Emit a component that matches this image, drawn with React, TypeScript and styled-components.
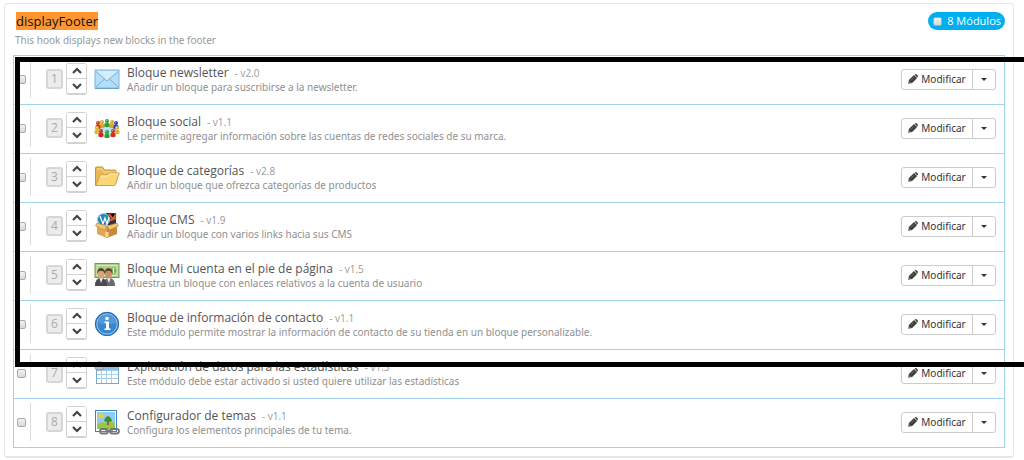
import React from 'react';
import styled, { createGlobalStyle } from 'styled-components';

const GlobalStyle = createGlobalStyle`
  * { box-sizing: border-box; }
  body {
    margin: 0;
    background: #fff;
    color: #555;
    font-family: "Open Sans", "Noto Sans", sans-serif;
    font-size: 12px;
  }
  button, input { font: inherit; margin: 0; }
`;

const Page = styled.main`
  position: relative;
  padding: 3px 10px 0 4px;
  overflow: hidden;
`;

const Panel = styled.section`
  padding: 8px 8px;
  border: 1px solid #e6e6e6;
  border-bottom-width: 2px;
  border-radius: 4px;
`;

const PanelHeader = styled.header`
  display: flex;
  justify-content: space-between;
  align-items: flex-start;
  padding-left: 2px;
  height: 43px;
`;

const HookName = styled.h1`
  display: table;
  margin: 0 0 0 1px;
  background: #ff9632;
  color: #111;
  font-size: 13px;
  font-weight: 400;
  line-height: 18px;
`;

const HookDescription = styled.p`
  margin: 3px 0 0;
  color: #999;
  font-family: "Noto Sans", "Open Sans", sans-serif;
  font-size: 10px;
  line-height: 14px;
`;

const CountBadge = styled.label`
  display: flex;
  align-items: center;
  gap: 5px;
  height: 18px;
  padding: 0 4px 0 5px;
  border-radius: 9px;
  background: #00aff0;
  color: #fff;
  font-size: 11px;
  line-height: 20px;
`;

const Checkbox = styled.input.attrs({ type: 'checkbox' })`
  appearance: none;
  flex: none;
  width: 9px;
  height: 9px;
  border: 1px solid #aaa;
  border-radius: 2px;
  background: linear-gradient(#f2f2f2, #d8d8d8);
`;

const ModuleList = styled.ul`
  margin: 0;
  padding: 0;
  list-style: none;
  border: 1px solid #9fd3ee;
`;

const ModuleRow = styled.li`
  display: flex;
  align-items: center;
  height: 49px;
  padding: 0 8px 2px 3px;
  border-bottom: 1px solid #9fd3ee;
  &:last-child {
    height: 48px;
    border-bottom: 0;
  }
`;

const SelectCell = styled.div`
  display: flex;
  align-items: center;
  width: 14px;
  height: 38px;
  margin-right: 15px;
  border-right: 1px solid #ddd;
`;

const Position = styled.span`
  width: 17px;
  height: 20px;
  margin-right: 3px;
  border: 2px solid #d6d6d6;
  border-radius: 3px;
  background: #ececec;
  color: #aaa;
  font-size: 12px;
  line-height: 16px;
  text-align: center;
`;

const Mover = styled.div`
  width: 21px;
  margin-right: 7px;
  border: 1px solid #d2d2d2;
  border-bottom-width: 2px;
  border-radius: 3px;
`;

const MoveButton = styled.button`
  display: flex;
  align-items: center;
  justify-content: center;
  width: 100%;
  height: 14px;
  padding: 0;
  border: 0;
  background: #fff;
  & + & {
    height: 15px;
    border-top: 1px solid #d2d2d2;
  }
`;

const IconFrame = styled.svg`
  flex: none;
  width: 26px;
  height: 28px;
`;

const Details = styled.div`
  flex: 1;
  min-width: 0;
  margin: 0 8px 0 7px;
  white-space: nowrap;
`;

const Title = styled.h2`
  margin: 0;
  color: #555;
  font-size: 12px;
  font-weight: 400;
  line-height: 16px;
`;

const Version = styled.small`
  margin-left: 6px;
  color: #999;
  font-size: 10px;
`;

const Description = styled.p`
  margin: 0;
  color: #909090;
  font-family: "Noto Sans", "Open Sans", sans-serif;
  font-size: 10px;
  line-height: 13px;
`;

const ButtonGroup = styled.div`
  display: flex;
  height: 21px;
  border: 1px solid #ccc;
  border-radius: 3px;
`;

const ActionButton = styled.button<{ $toggle?: boolean }>`
  display: flex;
  align-items: center;
  justify-content: center;
  gap: 3px;
  width: ${p => (p.$toggle ? 23 : 70)}px;
  padding: 0;
  border: 0;
  border-left: ${p => (p.$toggle ? '1px solid #ccc' : '0')};
  background: transparent;
  color: #333;
  font-family: "Noto Sans", "Open Sans", sans-serif;
  font-size: 10px;
  line-height: 16px;
`;

const HighlightFrame = styled.div`
  position: absolute;
  top: 57px;
  left: 15px;
  right: 0;
  height: 310px;
  border: 5px solid #000;
  border-right: 0;
  pointer-events: none;
`;

const Chevron = ({ down }: { down?: boolean }) => (
  <svg width="12" height="8" viewBox="0 0 12 8" aria-hidden="true">
    <path d={down ? 'M2 2l4 4 4-4' : 'M2 6l4-4 4 4'} fill="none" stroke="#444" strokeWidth="2.2" />
  </svg>
);

const Pencil = () => (
  <svg width="10" height="10" viewBox="0 0 10 10" aria-hidden="true">
    <path d="M.2 9.800l.7-3.900L6 .9l3.100 3.100-5 5zM6.600.6L7.200.2q.6-.4 1.200 0l1.400 1.400q.4.600 0 1.200l-.5.700z" fill="#3c3c3c" />
    <path d="M2.800 6.500l3.200-3.200" stroke="#aaa" strokeWidth=".5" />
    <path d="M1.200 7.700l1.100 1.100" stroke="#eee" strokeWidth=".7" />
  </svg>
);

const Caret = () => (
  <svg width="6" height="3" viewBox="0 0 6 3" aria-hidden="true">
    <path d="M0 0h6L3 3z" fill="#333" />
  </svg>
);

const ModuleIcon = ({ children }: { children: React.ReactNode }) => (
  <IconFrame viewBox="0 0 26 28" aria-hidden="true">{children}</IconFrame>
);

const MailIcon = () => (
  <ModuleIcon>
    <rect x="1" y="5" width="24" height="18" fill="#b5def8" stroke="#7db4dc" />
    <path d="M2 6h22L13 16z" fill="#d4edfc" />
    <path d="M2 22l8.500-8M24 22l-8.500-8M2 6.500l11 9.500 11-9.500" fill="none" stroke="#76aed6" />
    <path d="M1 23.500h24" stroke="#6ba3cf" />
  </ModuleIcon>
);

const Person = ({ x, y, color }: { x: number; y: number; color: string }) => (
  <g fill={color}>
    <path d={`M${x - 2.6} ${y + 5.5}q-.4-4 2.600-4t2.600 4q-2.600 1.600-5.200 0z`} />
    <circle cx={x} cy={y} r="2" />
    <circle cx={x - 0.6} cy={y - 0.6} r=".7" fill="#fff" opacity=".5" />
  </g>
);

const SocialIcon = () => (
  <ModuleIcon>
    <ellipse cx="13" cy="15" rx="9" ry="6" fill="#b9e2f2" />
    <Person x={8} y={8} color="#d8a72c" />
    <Person x={18} y={8} color="#d8a72c" />
    <Person x={13} y={7} color="#2f9e37" />
    <Person x={4} y={9} color="#d7301f" />
    <Person x={22} y={9} color="#2345c4" />
    <Person x={3} y={14} color="#e0b33a" />
    <Person x={23} y={14} color="#e0b33a" />
    <Person x={7} y={17} color="#cf2a1f" />
    <Person x={19} y={17} color="#d7301f" />
    <Person x={13} y={18} color="#2f9e37" />
  </ModuleIcon>
);

const FolderIcon = () => (
  <ModuleIcon>
    <path d="M1.500 22.500V5q0-1 1-1h6l2 3H21q1 0 1 1v5z" fill="#e9b956" stroke="#c99436" />
    <path d="M3 6h5l2 3h11" fill="none" stroke="#f8dc95" />
    <path d="M2 22.500L6 12h7l2-2h10.300L21.500 21.500q-.4 1-1.500 1z" fill="#fbd679" stroke="#d29f42" />
    <path d="M6.700 13h6.700l2-2h8.400" fill="none" stroke="#fff0b8" />
  </ModuleIcon>
);

const BoxIcon = () => (
  <ModuleIcon>
    <path d="M12 1h10v12H12z" fill="#303443" />
    <path d="M15 2l4 5 3-5M14 9l8-3" stroke="#e45b29" strokeWidth="2" />
    <circle cx="9.500" cy="7.500" r="6" fill="#2784b8" stroke="#a7d6ec" />
    <path d="M6 4l3 8 2-6 2 6 2-7" fill="none" stroke="#fff" strokeWidth="1.200" />
    <path d="M3 12l10 2v12L3 22z" fill="#e0a951" />
    <path d="M23 12l-10 2v12l10-4z" fill="#c88a38" />
    <path d="M3 11l10 3-2.500 4L1.500 14zM23 11l-10 3 2.500 4 9-4z" fill="#f0c67a" stroke="#b97c2c" strokeWidth=".6" />
    <path d="M11.500 20v4.500l3 .5v-5z" fill="#f3dca2" />
  </ModuleIcon>
);

const CustomerIcon = () => (
  <ModuleIcon>
    <rect x="1" y="2.500" width="24" height="14" fill="#a9cf89" stroke="#68a04e" />
    <rect x="3" y="4.500" width="20" height="10" fill="none" stroke="#d4e9bf" />
    <circle cx="19.500" cy="9.500" r="3" fill="#74ad57" />
    <path d="M19.500 7v5M18.500 8h2M18.500 11h2" stroke="#e3f2d5" />
    <path d="M10 25q-1-8 5-8t6 8z" fill="#6c6c6c" />
    <path d="M1 25q0-8 6-8t6 8z" fill="#4c4c4c" />
    <path d="M5.500 17l1.500 5 2-5M13 17l2 5 1.500-5" fill="#f3f3f3" />
    <ellipse cx="7" cy="13" rx="3.300" ry="4.500" fill="#d9a47c" />
    <ellipse cx="14.500" cy="13" rx="3.300" ry="4.500" fill="#c98f66" />
    <path d="M3 13q0-6 4-6t4 6l-2-3-4 0zM10.500 13q0-6 4-6t4 6l-2-3-4 0z" fill="#60402a" />
  </ModuleIcon>
);

const InfoIcon = () => (
  <ModuleIcon>
    <circle cx="13" cy="14" r="11.700" fill="#2b78c0" stroke="#2467a8" />
    <circle cx="13" cy="14" r="10.200" fill="#3687d0" stroke="#a3cbed" />
    <path d="M4 13a9 9 0 0 1 18 0q-9 3-18 0z" fill="#6aabe0" opacity=".5" />
    <circle cx="13" cy="8.500" r="1.800" fill="#fff" />
    <path d="M10.500 11.500H15v7h1.500V20h-6v-1.500H12V13h-1.500z" fill="#fff" />
  </ModuleIcon>
);

const StatsIcon = () => (
  <ModuleIcon>
    <rect x="2.500" y="4.500" width="22" height="20" fill="#fff" stroke="#75a9ce" />
    <path d="M3 5h21v6H3z" fill="#8cc0e5" />
    <path d="M3 11.500h21M3 15.500h21M3 19.500h21M7.500 11v13M12.500 11v13M17.500 11v13" stroke="#a8cee8" />
    <rect x="1" y="3" width="9" height="8" rx="3" fill="#b7bdc2" stroke="#8f979d" />
  </ModuleIcon>
);

const ThemeIcon = () => (
  <ModuleIcon>
    <rect x="1.500" y="2.500" width="21" height="21" fill="#fff" stroke="#3e83b5" />
    <path d="M3 4h18v13H3z" fill="#8dcdf3" />
    <path d="M3 16q5-3 9-1 5-2 9 0v6H3z" fill="#9dc545" />
    <circle cx="7" cy="8" r="2.500" fill="#ffc832" />
    <path d="M14 17v-4" stroke="#80512a" strokeWidth="1.500" />
    <path d="M14 8q3 1 4 5-4 2-8 0 1-4 4-5z" fill="#408b2c" />
    <g fill="none" stroke="#737679" strokeWidth="1.800">
      <rect x="6" y="21" width="8" height="4.500" rx="2.200" />
      <rect x="16" y="21" width="9" height="4.500" rx="2.200" />
      <path d="M11 23.200h8" />
    </g>
  </ModuleIcon>
);

const modules = [
  { name: 'Bloque newsletter', version: 'v2.0', text: 'Añadir un bloque para suscribirse a la newsletter.', Icon: MailIcon },
  { name: 'Bloque social', version: 'v1.1', text: 'Le permite agregar información sobre las cuentas de redes sociales de su marca.', Icon: SocialIcon },
  { name: 'Bloque de categorías', version: 'v2.8', text: 'Añdir un bloque que ofrezca categorías de productos', Icon: FolderIcon },
  { name: 'Bloque CMS', version: 'v1.9', text: 'Añadir un bloque con varios links hacia sus CMS', Icon: BoxIcon },
  { name: 'Bloque Mi cuenta en el pie de página', version: 'v1.5', text: 'Muestra un bloque con enlaces relativos a la cuenta de usuario', Icon: CustomerIcon },
  { name: 'Bloque de información de contacto', version: 'v1.1', text: 'Este módulo permite mostrar la información de contacto de su tienda en un bloque personalizable.', Icon: InfoIcon },
  { name: 'Explotación de datos para las estadísticas', version: 'v1.3', text: 'Este módulo debe estar activado si usted quiere utilizar las estadísticas', Icon: StatsIcon },
  { name: 'Configurador de temas', version: 'v1.1', text: 'Configura los elementos principales de tu tema.', Icon: ThemeIcon },
];

export default function App() {
  return (
    <Page>
      <GlobalStyle />
      <Panel>
        <PanelHeader>
          <div>
            <HookName>displayFooter</HookName>
            <HookDescription>This hook displays new blocks in the footer</HookDescription>
          </div>
          <CountBadge>
            <Checkbox />
            8 Módulos
          </CountBadge>
        </PanelHeader>
        <ModuleList>
          {modules.map(({ name, version, text, Icon }, index) => (
            <ModuleRow key={name}>
              <SelectCell>
                <Checkbox aria-label={name} />
              </SelectCell>
              <Position>{index + 1}</Position>
              <Mover>
                <MoveButton type="button" aria-label="Subir"><Chevron /></MoveButton>
                <MoveButton type="button" aria-label="Bajar"><Chevron down /></MoveButton>
              </Mover>
              <Icon />
              <Details>
                <Title>{name}<Version>- {version}</Version></Title>
                <Description>{text}</Description>
              </Details>
              <ButtonGroup>
                <ActionButton type="button"><Pencil />Modificar</ActionButton>
                <ActionButton type="button" $toggle aria-label="Más acciones"><Caret /></ActionButton>
              </ButtonGroup>
            </ModuleRow>
          ))}
        </ModuleList>
      </Panel>
      <HighlightFrame />
    </Page>
  );
}
